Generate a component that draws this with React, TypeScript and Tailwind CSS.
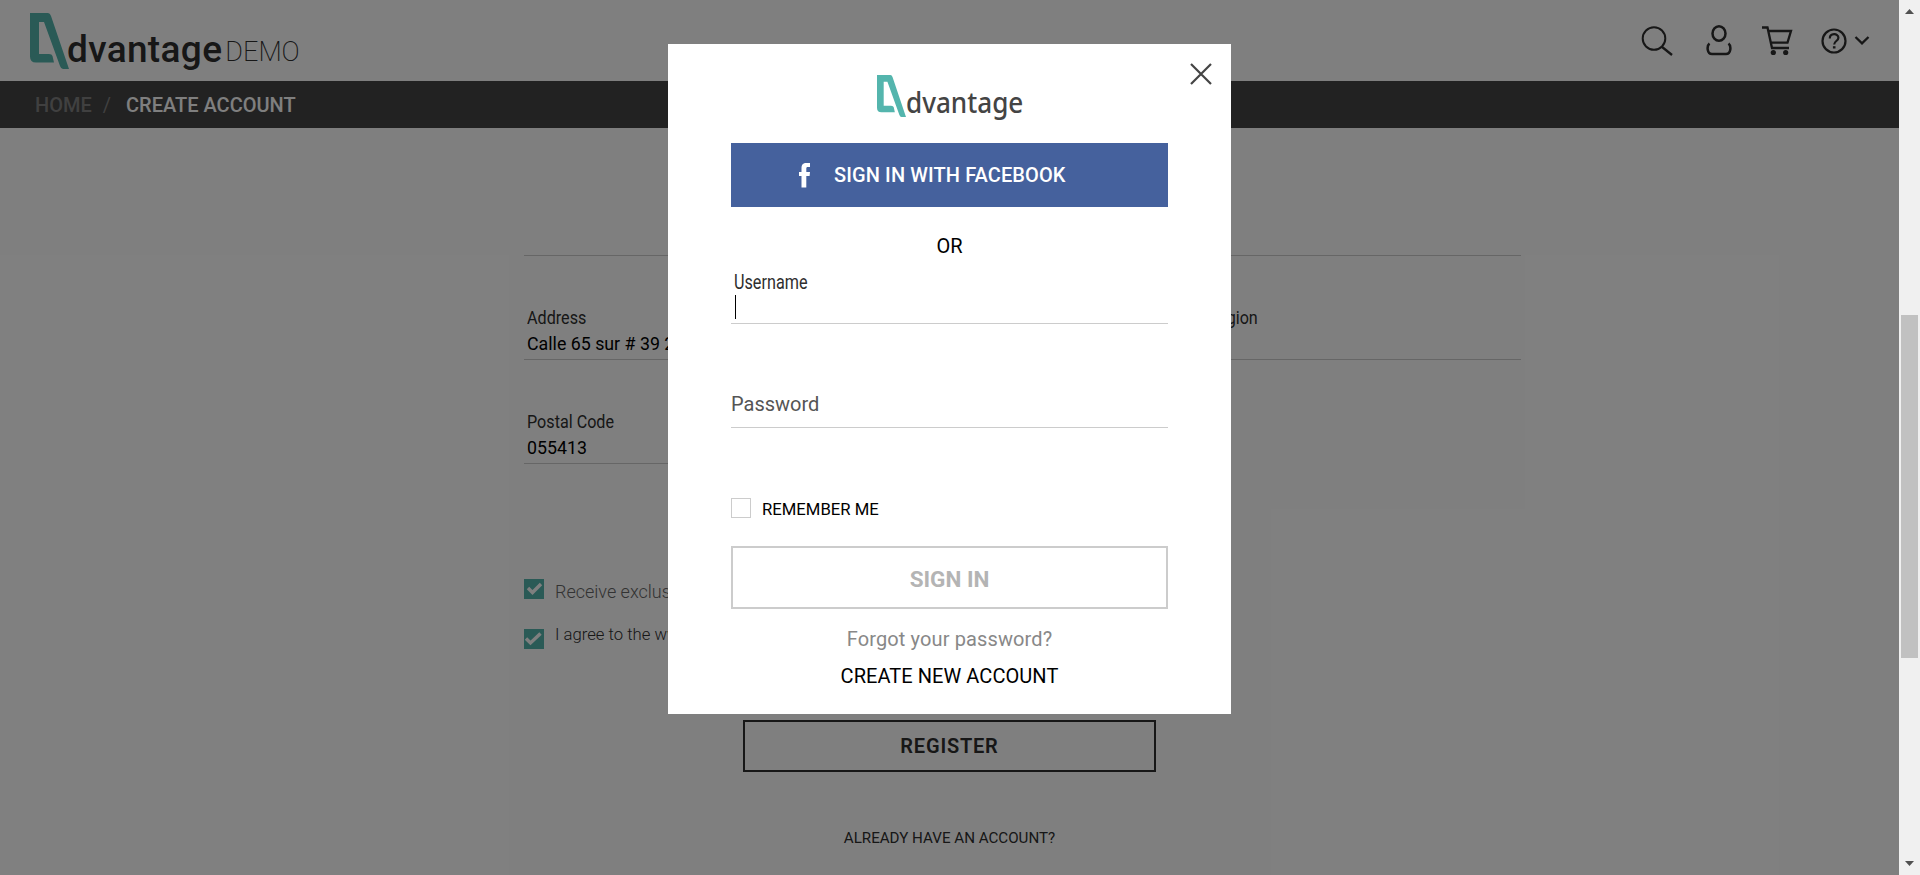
import type { ReactNode } from "react";

function LogoMark({ className }: { className: string }) {
  return (
    <svg viewBox="0 0 39 56" preserveAspectRatio="none" className={className}>
      <path
        d="M0 0H18Q20 0 21 3L39 56H33Q31 56 30 53L14 9H9V41H19Q22 41 22.500 43L24 49.500H6Q0 49.500 0 43.500Z"
        fill="#54b5ad"
      />
    </svg>
  );
}

function Header() {
  return (
    <header className="flex h-[81px] items-start justify-between bg-white text-[#2e2e2e]">
      <div className="flex pl-[30px] pt-[13px]">
        <LogoMark className="h-14 w-[39px]" />
        <span className="-ml-[2px] mt-[15px] text-[37px] font-medium leading-[44px] tracking-[0.350px]">dvantage</span>
        <span className="ml-[3px] mt-[19px] text-[27px] font-extralight leading-[40px]">DEMO</span>
      </div>
      <div className="flex pr-[29px] pt-[24px]">
        <svg className="h-8 w-8" viewBox="0 0 32 32" fill="none" stroke="currentColor" strokeWidth="2">
          <circle cx="13" cy="14.500" r="11.300" />
          <path d="M20.500 22.500L31 31" strokeWidth="2.300" />
        </svg>
        <svg className="ml-[33px] h-8 w-[26px]" viewBox="0 0 26 32" fill="none" stroke="currentColor" strokeWidth="2.500">
          <ellipse cx="13" cy="9.500" rx="6.500" ry="7.300" />
          <path d="M3.500 19.500C0.500 22 1 30 6 30H20C25 30 25.500 22 22.500 19.500" />
        </svg>
        <svg className="ml-[29px] h-8 w-[32px]" viewBox="0 0 32 32" fill="none" stroke="currentColor" strokeWidth="2.300">
          <path d="M1 3.500H6.500L11 24H28M7.500 7H30L26.500 18.700H9.500" />
          <circle cx="12.300" cy="28.500" r="2.600" fill="currentColor" stroke="none" />
          <circle cx="24.700" cy="28.500" r="2.600" fill="currentColor" stroke="none" />
        </svg>
        <svg className="ml-[27px] h-8 w-[28px]" viewBox="0 0 28 32" fill="none" stroke="currentColor" strokeWidth="2.200">
          <circle cx="14" cy="17" r="11.500" />
          <path d="M9.800 14.500C9.800 8.800 18.400 9 18.400 13.700C18.400 17 14.200 17 14.200 20.500" />
          <path d="M14.200 22.200V24.500" strokeWidth="2.600" />
        </svg>
        <svg className="ml-[6px] h-8 w-[16px]" viewBox="0 0 16 32" fill="none" stroke="currentColor" strokeWidth="2.300">
          <path d="M1.500 13L8 19.300L14.500 13" />
        </svg>
      </div>
    </header>
  );
}

function Breadcrumb() {
  return (
    <nav className="flex h-[47px] items-center bg-[#444] pl-[35px] pt-px text-[20px] font-medium text-white">
      <span className="text-[#808080]">HOME</span>
      <span className="ml-[11px] font-normal text-[#808080]">/</span>
      <span className="ml-[15px]">CREATE ACCOUNT</span>
    </nav>
  );
}

function Field({ label, value }: { label: string; value?: string }) {
  return (
    <div className="h-[104px] border-b border-[#ccc] pl-[3px] pt-[50px]">
      <div className="flex h-[24px] items-center text-[19px] text-[#2e2e2e]">
        <span className="origin-left scale-x-[0.85]">{label}</span>
      </div>
      <div className="mt-[2px] flex h-[24px] items-center text-[17.800px] text-black">{value}</div>
    </div>
  );
}

function Tick({ children, className, mark }: { children: ReactNode; className: string; mark: string }) {
  return (
    <div className={"flex " + className}>
      <svg className="h-5 w-5 shrink-0" viewBox="0 0 20 20">
        <rect width="20" height="20" fill="#54b5ad" />
        <path d={mark} fill="none" stroke="white" strokeWidth="3.400" />
      </svg>
      {children}
    </div>
  );
}

function RegisterForm() {
  return (
    <main className="flex flex-col">
      <div className="ml-[524px] w-[997px]">
        <div className="h-[128px] border-b border-[#ccc]" />
        <div className="grid grid-cols-2 gap-x-[107px]">
          <Field label="Address" value="Calle 65 sur # 39 22" />
          <Field label="State / Province / Region" />
          <Field label="Postal Code" value="055413" />
        </div>
        <Tick className="mt-[115px] h-[50px]" mark="M4 9L8.500 13.500L17 5">
          <span className="ml-[11px] mt-[1px] text-[18px] font-light leading-[24px] text-[#666]">
            Receive exclusive offers
          </span>
        </Tick>
        <Tick className="h-[91px]" mark="M2 9.500L6.500 14L16.500 4.500">
          <span className="ml-[11px] -mt-[6px] text-[16.700px] font-light leading-[24px] text-[#2e2e2e]">
            I agree to the www.Advantage
          </span>
        </Tick>
      </div>
      <div className="flex w-[1899px] flex-col items-center">
        <button className="h-[52px] w-[413px] border-2 border-[#2e2e2e] text-[20px] font-semibold tracking-[0.800px] text-[#2e2e2e]">
          REGISTER
        </button>
        <span className="mt-[54px] text-[15.150px] leading-[24px] text-[#2e2e2e]">ALREADY HAVE AN ACCOUNT?</span>
      </div>
    </main>
  );
}

function LoginDialog() {
  return (
    <section className="relative h-[670px] w-[563px] bg-white px-[63px] pt-[31px] text-[20px]">
      <svg className="absolute right-[19px] top-[19px] h-[22px] w-[22px]" viewBox="0 0 22 22" stroke="#444" strokeWidth="2.200">
        <path d="M1 1L21 21M21 1L1 21" />
      </svg>
      <div className="flex h-[68px] pl-[146px]">
        <LogoMark className="h-[42px] w-[29px]" />
        <span className="mt-[7px] origin-left scale-x-[0.9] font-['Noto_Sans'] text-[29px] font-medium leading-[40px] text-[#444]">
          dvantage
        </span>
      </div>
      <button className="flex h-16 w-full items-center bg-[#45619d] pl-[67px] font-medium tracking-[0.110px] text-white">
        <svg className="h-[26px] w-[13px]" viewBox="0 0 13 26">
          <path d="M3.500 25.500V14H1V10H3.500V6.500C3.500 2.500 5 1 8.500 1H12V5H10C8.500 5 8.300 5.500 8.300 7V10H12L11.600 14H8.300V25.500Z" fill="white" />
        </svg>
        <span className="ml-[23px]">SIGN IN WITH FACEBOOK</span>
      </button>
      <div className="mt-[27px] text-center leading-[24px] text-black">OR</div>
      <div className="mt-[12px] h-[54px] border-b border-[#ccc] pl-[3px]">
        <div className="flex h-[24px] items-center text-[#2e2e2e]">
          <span className="origin-left scale-x-[0.81]">Username</span>
        </div>
        <div className="ml-[1px] mt-[1px] h-[24px] w-px bg-black" />
      </div>
      <div className="flex h-[104px] items-end border-b border-[#ccc] pb-[11px] leading-[24px] text-[#555]">Password</div>
      <div className="mt-[70px] flex h-5 items-center">
        <span className="h-5 w-5 border border-[#ccc]" />
        <span className="ml-[11px] mt-[3px] text-[16.700px] text-black">REMEMBER ME</span>
      </div>
      <button className="mt-[28px] flex h-[63px] w-full items-center justify-center border-2 border-[#ccc] pt-[5px] text-[22.500px] font-bold text-[#b4b4b4]">
        SIGN IN
      </button>
      <div className="mt-[18px] text-center leading-[24px] tracking-[0.120px] text-[#888]">Forgot your password?</div>
      <div className="mt-[13px] text-center leading-[24px] tracking-[0.060px] text-black">CREATE NEW ACCOUNT</div>
    </section>
  );
}

function Scrollbar() {
  return (
    <aside className="flex h-full w-[21px] flex-col items-center bg-[#f0f0f0]">
      <svg className="mt-[9px] h-[5px] w-[9px]" viewBox="0 0 9 5">
        <path d="M0 5L4.500 0L9 5Z" fill="#505050" />
      </svg>
      <div className="mt-[301px] h-[343px] w-[17px] bg-[#c1c1c1]" />
      <svg className="mb-[9px] mt-auto h-[5px] w-[9px]" viewBox="0 0 9 5">
        <path d="M0 0L4.500 5L9 0Z" fill="#505050" />
      </svg>
    </aside>
  );
}

export default function App() {
  return (
    <div className="flex h-[875px] w-[1920px] overflow-hidden bg-white font-[Roboto,sans-serif]">
      <div className="relative h-full w-[1899px] overflow-hidden">
        <Header />
        <Breadcrumb />
        <RegisterForm />
        <div className="absolute inset-0 flex items-start bg-black/50 pl-[668px] pt-[44px]">
          <LoginDialog />
        </div>
      </div>
      <Scrollbar />
    </div>
  );
}
